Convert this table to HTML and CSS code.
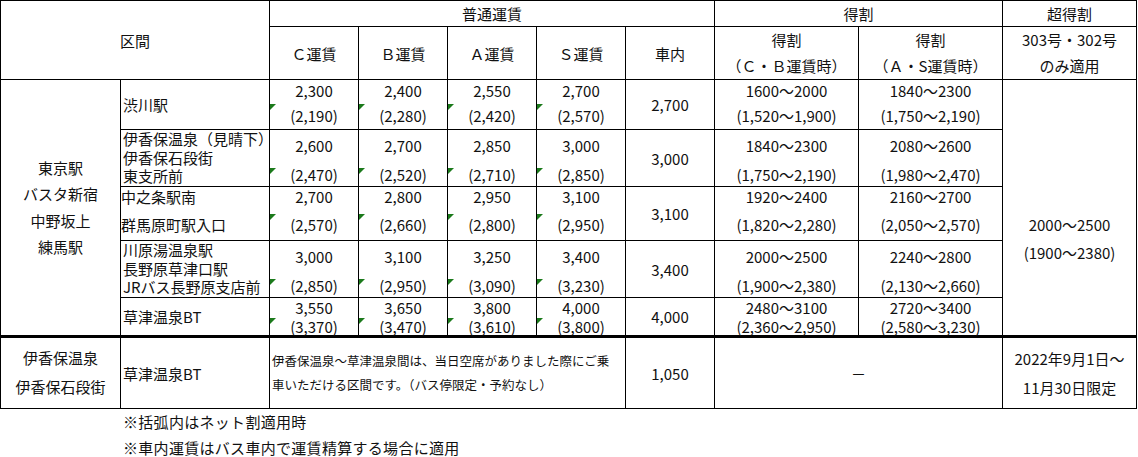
FILE: index.html
```html
<!DOCTYPE html>
<html lang="ja">
<head>
<meta charset="utf-8">
<title>運賃表</title>
<link rel="stylesheet" href="styles.css">
</head>
<body>
<div class="sheet">
  <div class="fare">
    <div class="c cs2 rs2">区間</div>
    <div class="c cs5">普通運賃</div>
    <div class="c cs2">得割</div>
    <div class="c">超得割</div>

    <div class="c">Ｃ運賃</div>
    <div class="c">Ｂ運賃</div>
    <div class="c">Ａ運賃</div>
    <div class="c">Ｓ運賃</div>
    <div class="c">車内</div>
    <div class="c hd2"><span>得割</span><span>（Ｃ・Ｂ運賃時）</span></div>
    <div class="c hd2"><span>得割</span><span>（Ａ・S運賃時）</span></div>
    <div class="c hd2"><span>303号・302号</span><span>のみ適用</span></div>

    <!-- row 1 -->
    <div class="c rs5 origin"><span>東京駅</span><span>バスタ新宿</span><span>中野坂上</span><span>練馬駅</span></div>
    <div class="c st">渋川駅</div>
    <div class="c v r1"><i class="flag"></i><span>2,300</span><span>(2,190)</span></div>
    <div class="c v r1"><i class="flag"></i><span>2,400</span><span>(2,280)</span></div>
    <div class="c v r1"><i class="flag"></i><span>2,550</span><span>(2,420)</span></div>
    <div class="c v r1"><i class="flag"></i><span>2,700</span><span>(2,570)</span></div>
    <div class="c">2,700</div>
    <div class="c v r1"><span>1600～2000</span><span>(1,520～1,900)</span></div>
    <div class="c v r1"><span>1840～2300</span><span>(1,750～2,190)</span></div>
    <div class="c rs5 big"><span>2000～2500</span><span>(1900～2380)</span></div>

    <!-- row 2 -->
    <div class="c st st3 clipx"><span>伊香保温泉（見晴下）</span><span>伊香保石段街</span><span>東支所前</span></div>
    <div class="c v r2"><i class="flag"></i><span>2,600</span><span>(2,470)</span></div>
    <div class="c v r2"><i class="flag"></i><span>2,700</span><span>(2,520)</span></div>
    <div class="c v r2"><i class="flag"></i><span>2,850</span><span>(2,710)</span></div>
    <div class="c v r2"><i class="flag"></i><span>3,000</span><span>(2,850)</span></div>
    <div class="c">3,000</div>
    <div class="c v r2"><span>1840～2300</span><span>(1,750～2,190)</span></div>
    <div class="c v r2"><span>2080～2600</span><span>(1,980～2,470)</span></div>

    <!-- row 3 -->
    <div class="c st v r3"><span>中之条駅南</span><span>群馬原町駅入口</span></div>
    <div class="c v r3"><i class="flag"></i><span>2,700</span><span>(2,570)</span></div>
    <div class="c v r3"><i class="flag"></i><span>2,800</span><span>(2,660)</span></div>
    <div class="c v r3"><i class="flag"></i><span>2,950</span><span>(2,800)</span></div>
    <div class="c v r3"><i class="flag"></i><span>3,100</span><span>(2,950)</span></div>
    <div class="c">3,100</div>
    <div class="c v r3"><span>1920～2400</span><span>(1,820～2,280)</span></div>
    <div class="c v r3"><span>2160～2700</span><span>(2,050～2,570)</span></div>

    <!-- row 4 -->
    <div class="c st st3"><span>川原湯温泉駅</span><span>長野原草津口駅</span><span>JRバス長野原支店前</span></div>
    <div class="c v r4"><i class="flag"></i><span>3,000</span><span>(2,850)</span></div>
    <div class="c v r4"><i class="flag"></i><span>3,100</span><span>(2,950)</span></div>
    <div class="c v r4"><i class="flag"></i><span>3,250</span><span>(3,090)</span></div>
    <div class="c v r4"><i class="flag"></i><span>3,400</span><span>(3,230)</span></div>
    <div class="c">3,400</div>
    <div class="c v r4"><span>2000～2500</span><span>(1,900～2,380)</span></div>
    <div class="c v r4"><span>2240～2800</span><span>(2,130～2,660)</span></div>

    <!-- row 5 -->
    <div class="c st">草津温泉BT</div>
    <div class="c v r5"><i class="flag"></i><span>3,550</span><span>(3,370)</span></div>
    <div class="c v r5"><i class="flag"></i><span>3,650</span><span>(3,470)</span></div>
    <div class="c v r5"><i class="flag"></i><span>3,800</span><span>(3,610)</span></div>
    <div class="c v r5"><i class="flag"></i><span>4,000</span><span>(3,800)</span></div>
    <div class="c">4,000</div>
    <div class="c v r5"><span>2480～3100</span><span>(2,360～2,950)</span></div>
    <div class="c v r5"><span>2720～3400</span><span>(2,580～3,230)</span></div>

    <!-- row 6 -->
    <div class="c last lh-a"><span>伊香保温泉</span><span>伊香保石段街</span></div>
    <div class="c last st">草津温泉BT</div>
    <div class="c last cs4 note"><span>伊香保温泉～草津温泉間は、当日空席がありました際にご乗</span><span>車いただける区間です。（バス停限定・予約なし）</span></div>
    <div class="c last">1,050</div>
    <div class="c last cs2">－</div>
    <div class="c last lh-b"><span>2022年9月1日～</span><span>11月30日限定</span></div>
  </div>
  <div class="notes">
    <p>※括弧内はネット割適用時</p>
    <p>※車内運賃はバス車内で運賃精算する場合に適用</p>
  </div>
</div>
</body>
</html>
```

FILE: styles.css
```css
html, body {
  margin: 0;
  padding: 0;
  background: #fff;
}

body {
  font-family: "Noto Sans CJK JP", "Noto Sans", sans-serif;
  font-size: 15px;
  color: #111;
}

.fare {
  display: grid;
  grid-template-columns: 119px 148px repeat(5, 88px) 143px 143px 133px;
  grid-template-rows: 25px 52px 49px 56px 53px 56px 37px 72px;
  gap: 1px;
  background: #000;
  border: 1px solid #000;
  width: max-content;
}

.c {
  background: #fff;
  display: flex;
  flex-direction: column;
  justify-content: center;
  align-items: center;
  text-align: center;
  line-height: 19px;
  white-space: nowrap;
  position: relative;
}

.clipx { overflow-x: clip; }

.cs2 { grid-column: span 2; }
.cs4 { grid-column: span 4; }
.cs5 { grid-column: span 5; }
.rs2 { grid-row: span 2; }
.rs5 { grid-row: span 5; }

.hd2 { line-height: 26px; }
.origin { line-height: 26.3px; }

.st {
  align-items: flex-start;
  padding-left: 2px;
}
.st3 { line-height: 18.6px; }

.v { justify-content: space-between; }
.r1 { padding: 0.5px 0 4px; }
.r2 { padding: 5.5px 0 2px; }
.r3 { padding: 0 0 6.5px; }
.r4 { padding: 6px 0 2px; }
.r5 { justify-content: center; }

.flag {
  position: absolute;
  left: 0;
  width: 0;
  height: 0;
  border-top: 6px solid #1b7a1b;
  border-right: 6px solid transparent;
}
.r1 .flag { top: 24px; }
.r2 .flag { top: 38px; }
.r3 .flag { top: 27px; }
.r4 .flag { top: 38px; }
.r5 .flag { top: 20px; }

.big {
  justify-content: flex-start;
  padding-top: 131px;
  line-height: 27.5px;
}

.last { border-top: 2px solid #000; }
.lh-a { line-height: 28.6px; }
.lh-b { line-height: 29.4px; }

.note {
  align-items: flex-start;
  padding-left: 2px;
  font-size: 12.5px;
  line-height: 24px;
}

.notes {
  padding-left: 123px;
  font-size: 15px;
  line-height: 26px;
  letter-spacing: 0.3px;
}
.notes p { margin: 0; }
```
